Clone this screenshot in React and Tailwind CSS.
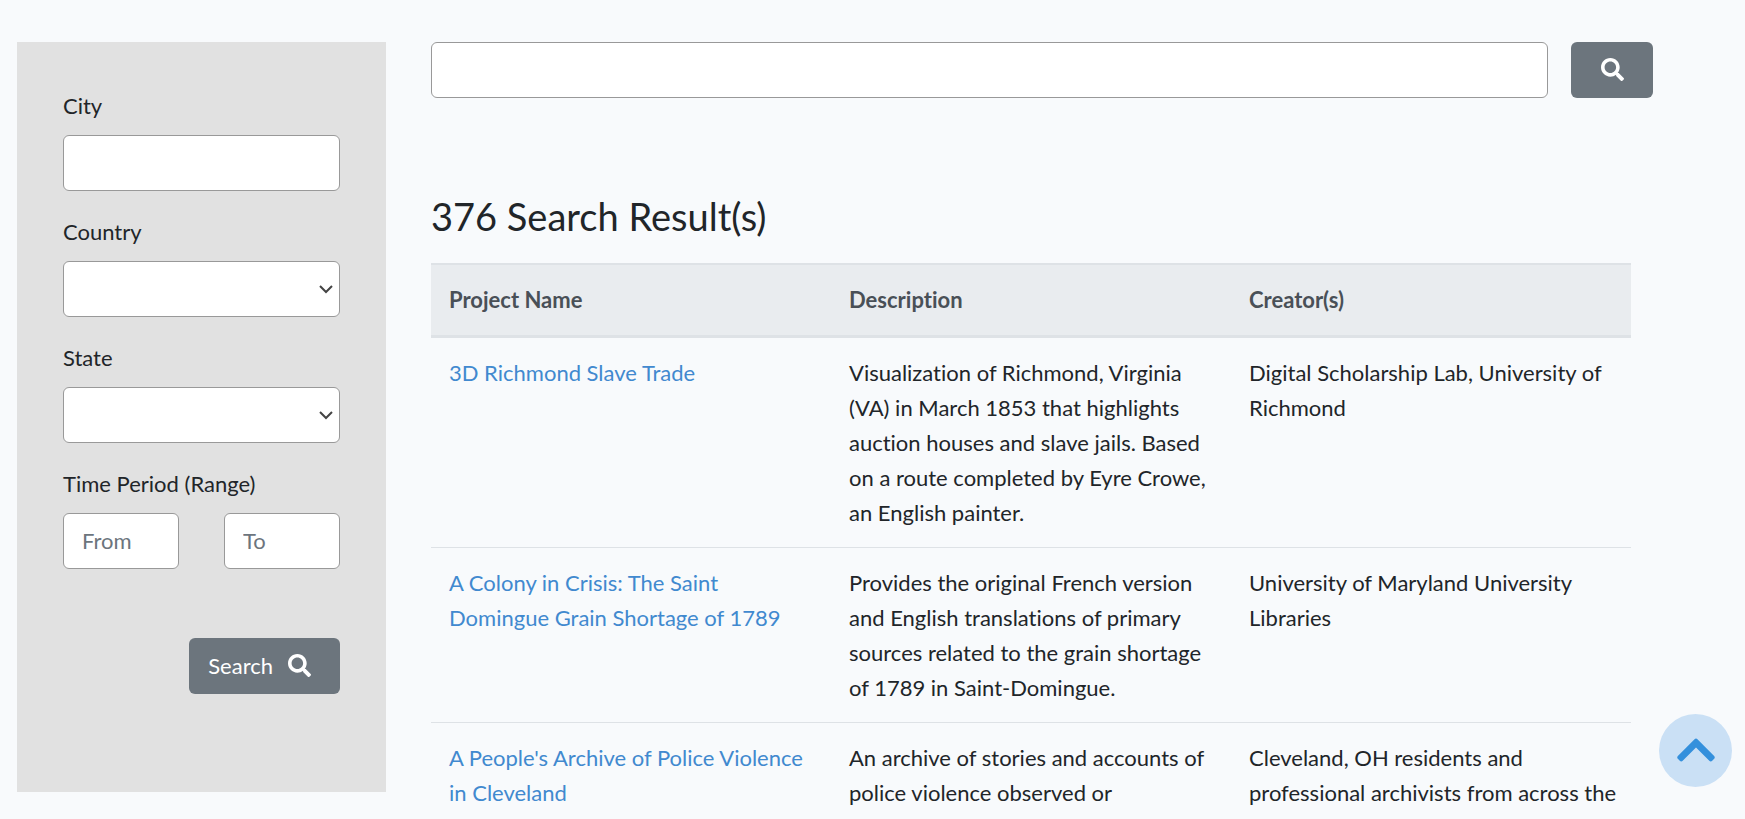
import { FaChevronUp, FaSearch } from 'react-icons/fa'

const PROJECTS = [
  {
    name: '3D Richmond Slave Trade',
    description: 'Visualization of Richmond, Virginia (VA) in March 1853 that highlights auction houses and slave jails. Based on a route completed by Eyre Crowe, an English painter.',
    creators: 'Digital Scholarship Lab, University of Richmond',
  },
  {
    name: 'A Colony in Crisis: The Saint Domingue Grain Shortage of 1789',
    description: 'Provides the original French version and English translations of primary sources related to the grain shortage of 1789 in Saint-Domingue.',
    creators: 'University of Maryland University Libraries',
  },
  {
    name: "A People's Archive of Police Violence in Cleveland",
    description: 'An archive of stories and accounts of police violence observed or',
    creators: 'Cleveland, OH residents and professional archivists from across the',
  },
]

const COLUMNS = ['Project Name', 'Description', 'Creator(s)']

const FIELD = 'block w-full min-w-0 h-14 rounded-md border border-[#999] bg-white px-[18px] pb-0.5 text-[#495057] placeholder:text-[#6c757d]'
const BUTTON = 'flex h-14 items-center rounded-md bg-[#6c757d] pb-0.5 text-white cursor-pointer'
const CELL = 'pl-[18px] pr-2 py-[17px]'

function SelectField({ id, label }) {
  return (
    <div>
      <label htmlFor={id} className="block mb-3">{label}</label>
      <div className="relative">
        <select id={id} className={`${FIELD} appearance-none`}>
          <option value=""></option>
        </select>
        <svg viewBox="0 0 14 9" className="pointer-events-none absolute right-[7px] top-6 h-[9px] w-[14px]" fill="none" stroke="#444" strokeWidth="2">
          <path d="M1 1l6 6 6-6" />
        </svg>
      </div>
    </div>
  )
}

function Filters() {
  return (
    <aside className="w-[369px] shrink-0 bg-[#e1e1e1] px-[46px] pt-[46px] pb-[98px]">
      <form onSubmit={e => e.preventDefault()}>
        <div className="flex flex-col gap-[23px]">
          <div>
            <label htmlFor="city" className="block mb-3">City</label>
            <input id="city" type="text" className={FIELD} />
          </div>
          <SelectField id="country" label="Country" />
          <SelectField id="state" label="State" />
          <fieldset>
            <legend className="mb-3">Time Period (Range)</legend>
            <div className="grid grid-cols-2 gap-[45px]">
              <input type="text" aria-label="From" placeholder="From" className={FIELD} />
              <input type="text" aria-label="To" placeholder="To" className={FIELD} />
            </div>
          </fieldset>
        </div>
        <button type="submit" className={`${BUTTON} ml-auto mt-[69px] gap-[15px] pl-[19px] pr-[29px]`}>
          Search
          <FaSearch size={23} />
        </button>
      </form>
    </aside>
  )
}

export default function App() {
  return (
    <div className="h-screen overflow-hidden bg-[#f8fafc] font-[Lato,sans-serif] text-[22px] leading-[35px] text-[#212529] [font-variant-ligatures:none]">
      <div className="flex items-start gap-[45px] pl-[17px] pr-[92px] pt-[42px]">
        <Filters />

        <main className="min-w-0 flex-1">
          <form className="flex gap-[23px]" onSubmit={e => e.preventDefault()}>
            <input type="search" aria-label="Search projects" className={FIELD} />
            <button type="submit" aria-label="Search" className={`${BUTTON} w-[82px] shrink-0 justify-center`}>
              <FaSearch size={23} />
            </button>
          </form>

          <h1 className="mt-[94px] mb-[23px] text-[38px] leading-[48px]">376 Search Result(s)</h1>

          <div className="pr-[22px]">
            <table className="w-full table-fixed border-collapse text-left">
              <thead className="bg-[#e9ecef] text-[#495057]">
                <tr className="border-t-2 border-b-3 border-[#dee2e6]">
                  {COLUMNS.map(c => (
                    <th key={c} scope="col" className="px-[18px] pt-[17px] pb-[18px] font-bold">{c}</th>
                  ))}
                </tr>
              </thead>
              <tbody>
                {PROJECTS.map(p => (
                  <tr key={p.name} className="border-b border-[#dee2e6] align-top">
                    <td className={CELL}>
                      <a href="#" className="text-[#4189cf]">{p.name}</a>
                    </td>
                    <td className={CELL}>{p.description}</td>
                    <td className={CELL}>{p.creators}</td>
                  </tr>
                ))}
              </tbody>
            </table>
          </div>
        </main>
      </div>

      {/* Back to top */}
      <button aria-label="Back to top" className="fixed right-[13px] bottom-8 flex size-[73px] items-center justify-center rounded-full bg-[#cae0f5] pb-0.5 text-[#3490dc] cursor-pointer">
        <FaChevronUp size={44} />
      </button>
    </div>
  )
}
